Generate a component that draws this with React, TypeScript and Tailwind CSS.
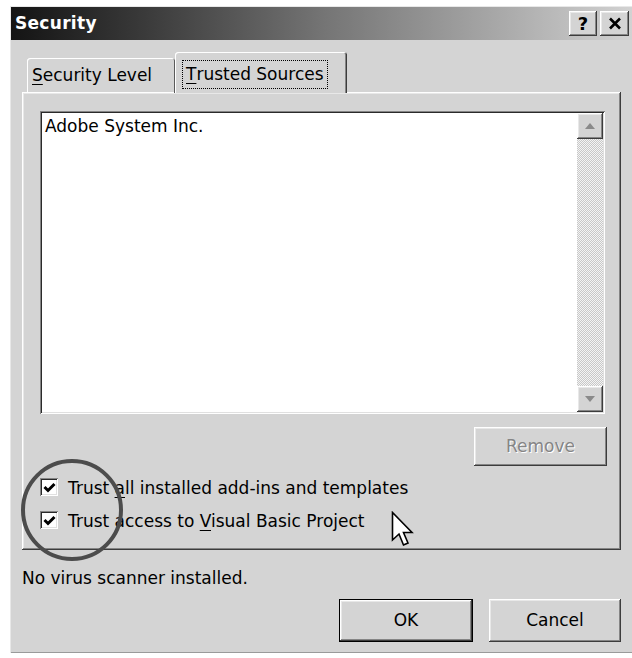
import React from "react";

// classic 3D bevels
const raised =
  "shadow-[inset_-1px_-1px_0_#3c3c3c,inset_1px_1px_0_#ffffff,inset_-2px_-2px_0_#858585,inset_2px_2px_0_#e8e8e8]";
const sunken =
  "shadow-[inset_1px_1px_0_#858585,inset_-1px_-1px_0_#ffffff,inset_2px_2px_0_#2a2a2a,inset_-2px_-2px_0_#e0e0e0]";

const Key = ({ children }: { children: React.ReactNode }) => (
  <span className="underline underline-offset-[3px] decoration-1">{children}</span>
);

const CheckBox = () => (
  <div className={`w-[18px] h-[18px] bg-white ${sunken} flex items-center justify-center shrink-0`}>
    <svg width="13" height="13" viewBox="0 0 13 13">
      <path d="M1.5 6 L5 9.5 L11.5 3" fill="none" stroke="#000" strokeWidth="3" />
    </svg>
  </div>
);

const Arrow = ({ up }: { up?: boolean }) => (
  <div className={`w-[26px] h-[26px] bg-[#d4d4d4] ${raised} flex items-center justify-center`}>
    <svg width="12" height="8" viewBox="0 0 12 8">
      {up ? (
        <polygon points="1,7 11,7 6,1" fill="#8a8a8a" />
      ) : (
        <polygon points="1,1 11,1 6,7" fill="#8a8a8a" />
      )}
    </svg>
  </div>
);

export default function App() {
  return (
    <div className="w-[632px] h-[658px] bg-white relative overflow-hidden font-['DejaVu_Sans',sans-serif] text-[17px] text-black">
      <div className="ml-[10px] mt-[6px] w-[622px] h-[647px] bg-[#d4d4d4] pt-[1px] pl-[1px] shadow-[inset_1px_1px_0_#e8e8e8,inset_0_-1px_0_#9a9a9a]">
        {/* title bar */}
        <div className="h-[33px] bg-gradient-to-r from-[#141414] via-[#747474] to-[#d2d2d2] flex items-center pl-[4px] pr-[3px]">
          <span className="text-white font-bold text-[17px] tracking-[0.3px]">Security</span>
          <div className="ml-auto flex gap-[3px]">
            <div className={`w-[28px] h-[25px] bg-[#d4d4d4] ${raised} flex items-center justify-center font-bold text-[18px] leading-none`}>
              ?
            </div>
            <div className={`w-[29px] h-[25px] bg-[#d4d4d4] ${raised} flex items-center justify-center`}>
              <svg width="14" height="13" viewBox="0 0 14 13">
                <path d="M2 1.5 L12 11.5 M12 1.5 L2 11.5" stroke="#000" strokeWidth="2.6" />
              </svg>
            </div>
          </div>
        </div>

        <div className="pl-[11px] pt-[13px]">
          {/* tabs */}
          <div className="flex items-end h-[40px] relative z-10 -mb-[1px]">
            <div className="ml-[5px] w-[148px] h-[35px] rounded-t-[3px] shadow-[inset_1px_1px_0_#ffffff,inset_-1px_0_0_#5a5a5a] flex items-center pl-[5px] pt-[1px]">
              <span>
                <Key>S</Key>ecurity Level
              </span>
            </div>
            <div className="w-[172px] h-[41px] bg-[#d4d4d4] rounded-t-[3px] shadow-[inset_1px_1px_0_#ffffff,inset_-1px_0_0_#3c3c3c,inset_-2px_0_0_#858585] flex items-start pt-[8px] pl-[7px]">
              <span className="border border-dotted border-black px-[3px] h-[29px] flex items-center">
                <Key>T</Key>rusted Sources
              </span>
            </div>
          </div>

          {/* tab page */}
          <div className={`w-[599px] h-[458px] ${raised} pt-[19px] pl-[18px] pr-[14px]`}>
            <div className={`w-[565px] h-[303px] bg-white ${sunken} flex p-[2px]`}>
              <div className="flex-1 pl-[3px] pt-[2px] leading-[22px]">Adobe System Inc.</div>
              <div className="w-[26px] flex flex-col bg-[repeating-conic-gradient(#c8c8c8_0_25%,#f4f4f4_0_50%)] bg-[length:2px_2px]">
                <Arrow up />
                <div className="flex-1" />
                <Arrow />
              </div>
            </div>

            <div className="flex justify-end mt-[13px]">
              <div className={`w-[133px] h-[39px] ${raised} flex items-center justify-center text-[#858585] [text-shadow:1px_1px_0_#ffffff]`}>
                Remove
              </div>
            </div>

            <div className="mt-[12px] flex flex-col gap-[15px]">
              <div className="flex items-center gap-[10px] h-[18px]">
                <CheckBox />
                <span className="pt-[3px]">
                  Trust <Key>a</Key>ll installed add-ins and templates
                </span>
              </div>
              <div className="flex items-center gap-[10px] h-[18px]">
                <CheckBox />
                <span className="pt-[3px]">
                  Trust access to <Key>V</Key>isual Basic Project
                </span>
              </div>
            </div>
          </div>

          <div className="mt-[18px] h-[20px] leading-[20px]">No virus scanner installed.</div>

          <div className="w-[599px] mt-[11px] flex justify-end gap-[16px]">
            <div className={`w-[134px] h-[43px] border border-black ${raised} flex items-center justify-center`}>
              OK
            </div>
            <div className={`w-[132px] h-[43px] ${raised} flex items-center justify-center`}>Cancel</div>
          </div>
        </div>
      </div>

      {/* highlight ring over the checkboxes */}
      <div className="absolute left-[21px] top-[459px] w-[102px] h-[102px] rounded-full border-[4px] border-[#4c4c4c]" />

      {/* mouse pointer */}
      <svg className="absolute left-[391px] top-[511px]" width="26" height="40" viewBox="0 0 26 40">
        <path
          d="M1.5 1.5 L1.5 29 L8 23 L12.5 34 L17 32 L12.5 21.5 L21 21.5 Z"
          fill="#fff"
          stroke="#000"
          strokeWidth="1.6"
          strokeLinejoin="miter"
        />
      </svg>
    </div>
  );
}
